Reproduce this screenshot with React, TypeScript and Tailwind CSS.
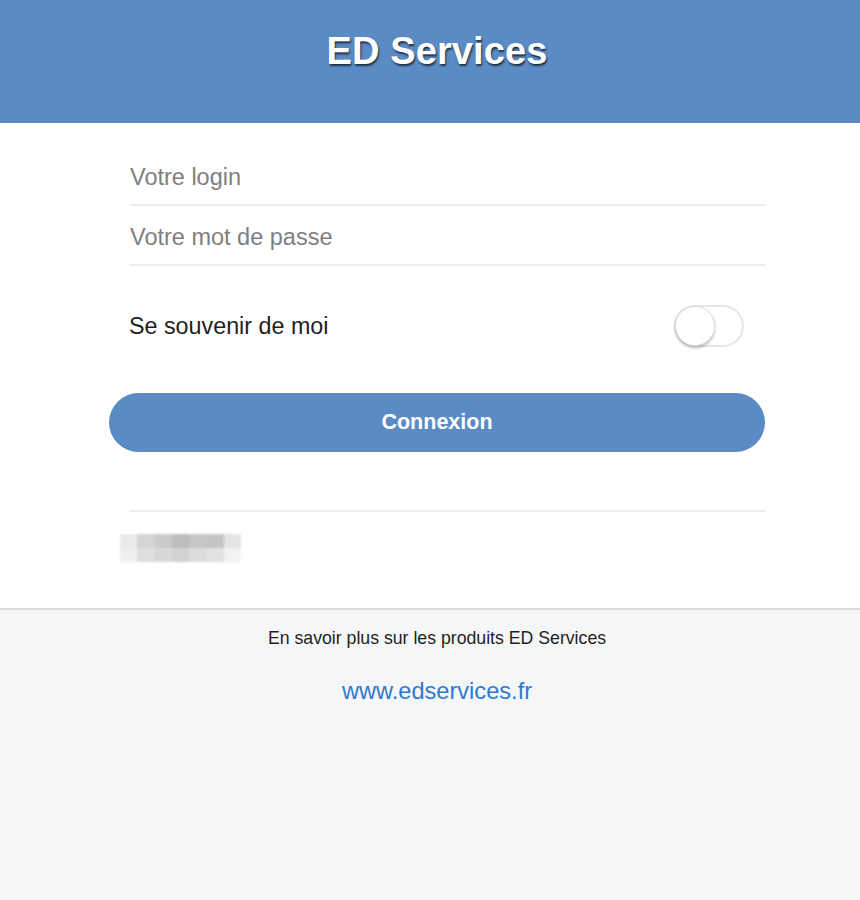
import React from "react";

const font = { fontFamily: '"Liberation Sans", Arial, Helvetica, sans-serif' };

const blurCells = [
  ["#eaeaea", "#d4d4d4", "#cbcbcb", "#bdbdbd", "#c6c6c6", "#c4c4c4", "#e4e4e4"],
  ["#efefef", "#dedede", "#d8d8d8", "#d2d2d2", "#dcdcdc", "#e2e2e2", "#f2f2f2"],
];

export default function App() {
  return (
    <div className="w-[860px] min-h-[900px] flex flex-col bg-white" style={font}>
      <header className="h-[123px] bg-[#5a8bc4] flex justify-center pt-[32px] pl-[14px]">
        <h1 className="text-[38px] leading-[38px] font-bold text-white tracking-[0.1px] [text-shadow:1px_2px_2px_rgba(0,0,0,0.65)]">
          ED Services
        </h1>
      </header>

      <main className="flex flex-col pl-[109px] w-[765px] pt-[23px] pb-[46px]">
        <div className="ml-[21px] h-[60px] border-b-2 border-[#ececec] flex items-center pt-[5px]">
          <span className="text-[23.5px] text-[#7f7f7f]">Votre login</span>
        </div>
        <div className="ml-[21px] h-[60px] border-b-2 border-[#ececec] flex items-center pt-[5px]">
          <span className="text-[23.5px] text-[#7f7f7f]">Votre mot de passe</span>
        </div>

        <div className="h-[120px] flex items-center justify-between pl-[20px] pr-[21px]">
          <span className="text-[23.3px] text-[#1f1f1f]">Se souvenir de moi</span>
          <div className="relative w-[70px] h-[42px] rounded-full border-2 border-[#e6e6e6] bg-white">
            <div className="absolute left-[-1px] top-[-1px] w-[40px] h-[40px] rounded-full bg-white border border-[#e0e0e0] shadow-[0_2px_3px_rgba(0,0,0,0.25)]" />
          </div>
        </div>

        <button className="mt-[7px] h-[59px] w-[656px] rounded-full bg-[#5a8bc4] text-white text-[21.5px] font-bold flex items-center justify-center">
          Connexion
        </button>

        <div className="ml-[21px] mt-[58px] h-[2px] bg-[#ececec]" />

        <div className="ml-[11px] mt-[22px] w-[121px] h-[28px] flex flex-col blur-[1px]">
          {blurCells.map((row, i) => (
            <div key={i} className="flex flex-1">
              {row.map((c, j) => (
                <div key={j} className="flex-1" style={{ backgroundColor: c }} />
              ))}
            </div>
          ))}
        </div>
      </main>

      <footer className="flex-1 bg-[#f5f6f8] border-t-2 border-[#dcdcdc] flex flex-col items-center pt-[17px] pl-[14px]">
        <p className="text-[17.7px] leading-[22px] text-[#1f1f1f]">
          En savoir plus sur les produits ED Services
        </p>
        <a className="mt-[28px] text-[23.6px] leading-[28px] text-[#2f7bd0]" href="#">
          www.edservices.fr
        </a>
      </footer>
    </div>
  );
}
